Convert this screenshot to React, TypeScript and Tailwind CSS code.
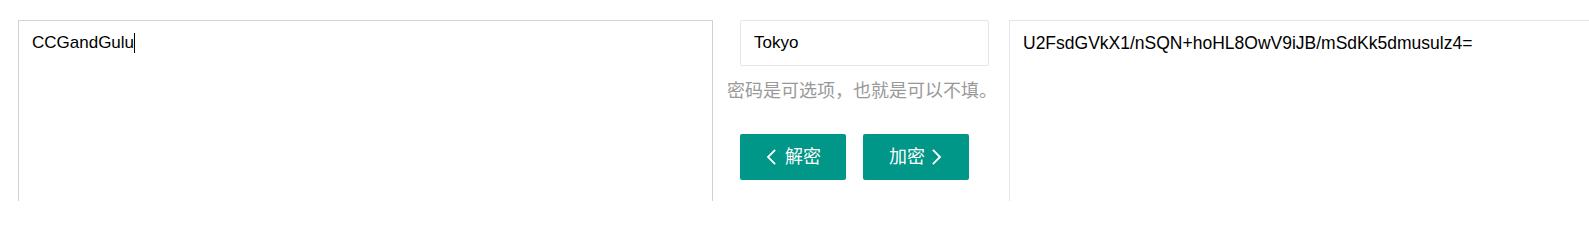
const SANS = "font-['Liberation_Sans','Arial',sans-serif]";
const CJK = "font-['Liberation_Sans','Noto_Sans_CJK_SC',sans-serif]";

const Chevron = ({ dir }: { dir: "left" | "right" }) => (
  <svg width="12" height="16" viewBox="0 0 12 16" fill="none" className="shrink-0">
    <path
      d={dir === "left" ? "M9.5 1.5 L3 8 L9.5 14.5" : "M2.5 1.5 L9 8 L2.5 14.5"}
      stroke="white"
      strokeWidth="1.8"
      strokeLinecap="square"
    />
  </svg>
);

export default function App() {
  return (
    <div className={`flex items-start bg-white h-[201px] overflow-hidden pt-[20px] ${SANS}`}>
      {/* plain text (focused, caret after the text) */}
      <div className="ml-[18px] w-[695px] h-[220px] shrink-0 border border-[#d2d2d2] bg-white px-[13px] py-[12px] text-[17px] leading-[20px] text-black">
        CCGandGulu
        <span className="inline-block w-px h-[20px] bg-black align-top" />
      </div>

      {/* middle: password + actions */}
      <div className="ml-[14px] w-[276px] shrink-0 flex flex-col">
        <input
          readOnly
          defaultValue="Tokyo"
          className="ml-[13px] w-[249px] h-[46px] border border-[#e6e6e6] rounded-[2px] bg-white px-[13px] text-[17px] text-black outline-none"
        />
        <p className={`mt-[13px] text-[18px] leading-[24px] text-[#999] whitespace-nowrap ${CJK}`}>
          密码是可选项，也就是可以不填。
        </p>
        <div className="ml-[13px] mt-[31px] flex gap-[17px]">
          <button
            className={`w-[106px] h-[46px] rounded-[2px] bg-[#009688] text-white text-[18px] flex items-center justify-center gap-[8px] ${CJK}`}
          >
            <Chevron dir="left" />
            <span>解密</span>
          </button>
          <button
            className={`w-[106px] h-[46px] rounded-[2px] bg-[#009688] text-white text-[18px] flex items-center justify-center gap-[6px] ${CJK}`}
          >
            <span>加密</span>
            <Chevron dir="right" />
          </button>
        </div>
      </div>

      {/* cipher text */}
      <textarea
        readOnly
        defaultValue="U2FsdGVkX1/nSQN+hoHL8OwV9iJB/mSdKk5dmusulz4="
        className="ml-[6px] w-[695px] h-[220px] shrink-0 resize-none border border-[#e6e6e6] bg-white px-[13px] py-[12px] text-[17.5px] leading-[20px] text-black outline-none"
      />
    </div>
  );
}
